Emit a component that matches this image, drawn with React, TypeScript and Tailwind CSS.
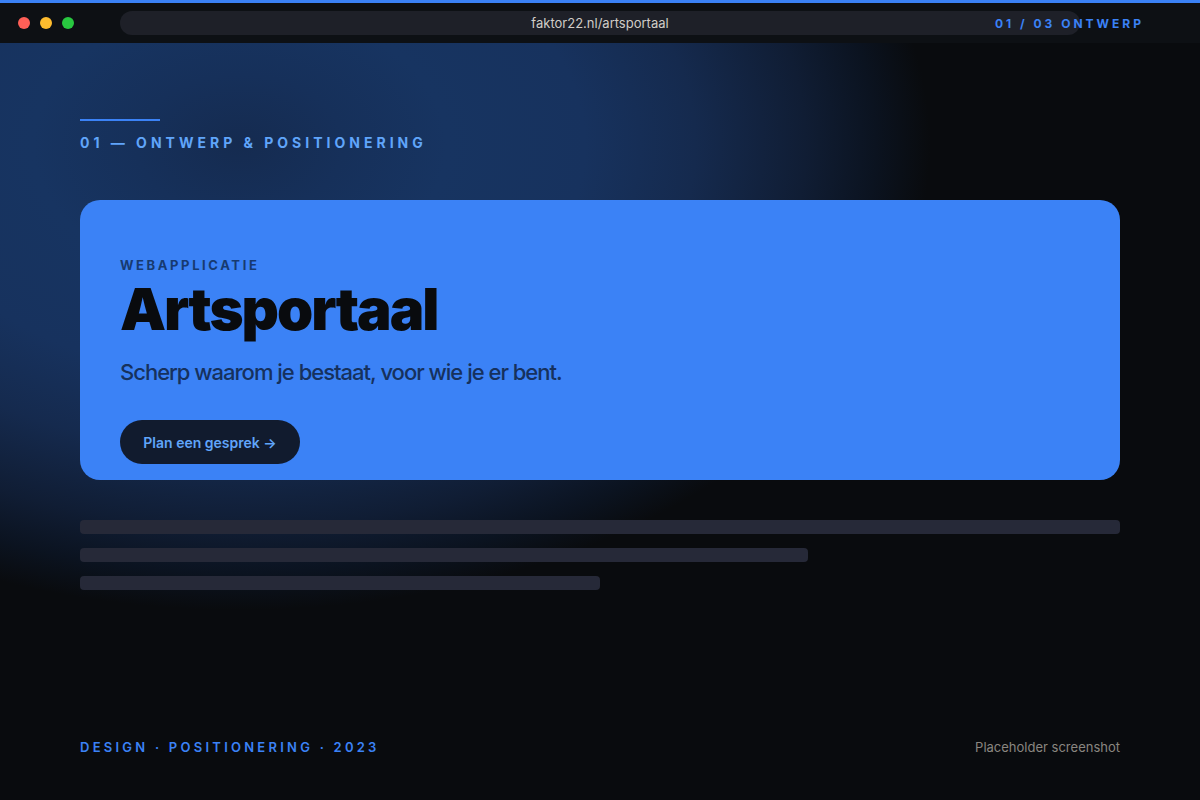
const dots = ["bg-[#ff5f57]", "bg-[#febc2e]", "bg-[#28c840]"];

const lines = ["w-full", "w-[70%]", "w-1/2"];

export default function App() {
    return (
        <div className="flex min-h-screen flex-col bg-[#090b0e] font-['Inter',sans-serif]">
            {/* Browser bar */}
            <header className="relative flex h-[43px] items-center border-t-[3px] border-[#3b82f6] bg-[#0d1014] px-[18px]">
                <div className="flex gap-[10px]">
                    {dots.map((color) => (
                        <span key={color} className={`size-3 rounded-full ${color}`}></span>
                    ))}
                </div>
                <input
                    type="text"
                    aria-label="Adres"
                    readOnly
                    value="faktor22.nl/artsportaal"
                    className="absolute inset-x-[120px] top-2 h-6 rounded-full bg-[#1e2028] text-center text-[13px] text-[#d1cdc7] outline-none"
                />
                <p className="absolute right-14 top-[13px] text-xs leading-4 font-bold tracking-[3px] text-[#3b82f6]">
                    01 / 03 ONTWERP
                </p>
            </header>

            <main className="flex flex-1 flex-col bg-[radial-gradient(690px_465px_at_240px_102px,#152b50_0%,#16305a_15%,#173461_30%,#17325e_50%,#152a4e_66%,#101d34_82%,#0b1320_92%,#090b0e_100%)] px-20 pt-[76px] pb-[41px]">
                <div className="h-[2px] w-20 bg-[#3b82f6]"></div>
                <p className="mt-3 text-sm leading-5 font-bold tracking-[4px] text-[#60a5fa]">
                    01 — ONTWERP &amp; POSITIONERING
                </p>

                <section className="mt-[47px] rounded-[20px] bg-[#3b82f6] px-10 pt-14 pb-4">
                    <p className="text-[13px] leading-[18px] font-bold tracking-[0.2em] text-[#173a70]">
                        WEBAPPLICATIE
                    </p>
                    <h1 className="text-[58px] leading-[70px] font-black tracking-[-2px] text-[#090b0e]">
                        Artsportaal
                    </h1>
                    <p className="mt-[14px] text-[22px] leading-7 font-medium tracking-[-1px] text-[#16315d]">
                        Scherp waarom je bestaat, voor wie je er bent.
                    </p>
                    <button className="mt-[34px] h-11 w-[180px] rounded-full bg-[#111b2e] pt-px text-sm font-semibold text-[#60a5fa]">
                        Plan een gesprek →
                    </button>
                </section>

                <div className="mt-10 space-y-[14px]">
                    {lines.map((width) => (
                        <div key={width} className={`h-[14px] rounded-sm bg-[#262938] ${width}`}></div>
                    ))}
                </div>

                <footer className="mt-auto flex items-center justify-between text-[13px] leading-6">
                    <p className="font-semibold tracking-[0.25em] text-[#3b82f6]">DESIGN · POSITIONERING · 2023</p>
                    <p className="text-[#8a8680]">Placeholder screenshot</p>
                </footer>
            </main>
        </div>
    );
}
